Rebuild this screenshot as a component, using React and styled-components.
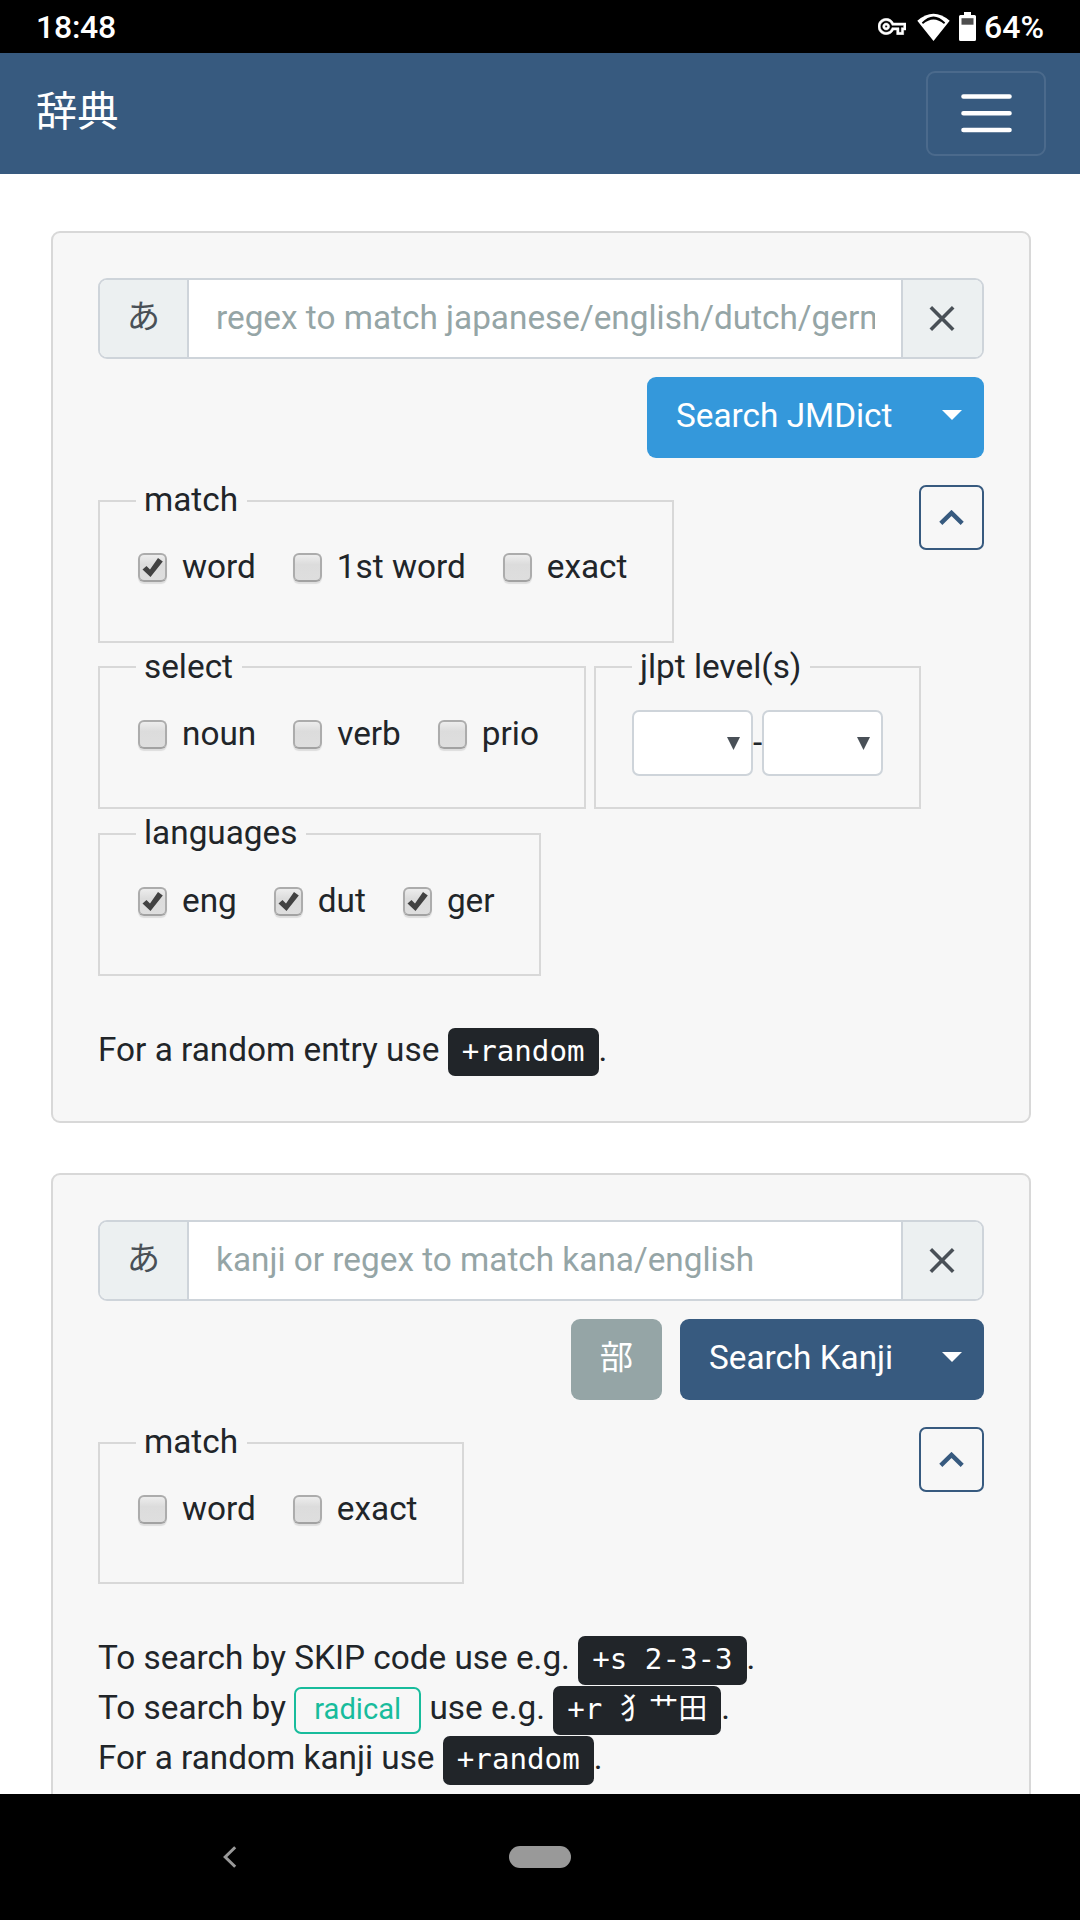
import React from "react";
import styled, { createGlobalStyle } from "styled-components";

const GlobalStyle = createGlobalStyle`
  * { box-sizing: border-box; }
  html, body { margin: 0; padding: 0; background: #fff; }
  body {
    font-family: Roboto, "Noto Sans CJK JP", sans-serif;
    font-size: 33.33px;
    line-height: 50px;
    color: #212529;
  }
  button, input { font: inherit; }
`;

const Screen = styled.div`
  width: 1080px;
  height: 1920px;
  display: flex;
  flex-direction: column;
  overflow: hidden;
`;

const StatusBar = styled.header`
  flex: none;
  height: 53px;
  padding: 0 36px;
  display: flex;
  align-items: center;
  justify-content: space-between;
  background: #000;
  color: #fff;
  font-size: 32px;
  font-weight: 500;
`;

const StatusText = styled.span`
  padding-top: 1px;
  letter-spacing: -0.25px;
`;

const StatusIcons = styled.div`
  display: flex;
  align-items: center;
  svg { display: block; }
`;

const WifiIcon = styled.svg`
  margin: 0 9px 0 11px;
`;

const BatteryLevel = styled(StatusText)`
  width: 60px;
  margin-left: 8px;
  letter-spacing: 0;
`;

const Navbar = styled.nav`
  flex: none;
  height: 121px;
  padding: 0 34px 0 36px;
  display: flex;
  align-items: center;
  justify-content: space-between;
  background: #375a7f;
`;

const Brand = styled.span`
  color: #fff;
  font-size: 41.3px;
  line-height: 62px;
  margin-top: -3px;
`;

const Toggler = styled.button`
  width: 120px;
  height: 85px;
  padding: 0;
  border: 2px solid rgba(255, 255, 255, 0.1);
  border-radius: 9px;
  background: transparent;
  display: flex;
  align-items: center;
  justify-content: center;
`;

const Content = styled.main`
  flex: 1;
  min-height: 0;
  overflow: hidden;
  padding: 57px 49px 0 51px;
  display: flex;
  flex-direction: column;
  gap: 50px;
  background: #fff;
`;

const Card = styled.section`
  flex: none;
  padding: 45px;
  background: #f7f7f7;
  border: 2px solid #d8d8d8;
  border-radius: 9px;
`;

const InputGroup = styled.div`
  display: flex;
  height: 81px;
  border: 2px solid #ced4da;
  border-radius: 9px;
  background: #fff;
  overflow: hidden;
`;

const Addon = styled.div`
  flex: none;
  width: ${(p) => p.$width}px;
  display: flex;
  align-items: center;
  justify-content: center;
  background: #ecf0f1;
  color: #495057;
  padding-bottom: ${(p) => p.$lift || 0}px;
  padding-right: ${(p) => p.$inset || 0}px;
  border: 0 solid #ced4da;
  border-${(p) => p.$divider}-width: 2px;
`;

const SearchInput = styled.input`
  flex: 1;
  min-width: 0;
  padding: 0 26px 2px 27px;
  border: 0;
  outline: 0;
  background: #fff;
  &::placeholder { color: #95a5a6; opacity: 1; }
`;

const Actions = styled.div`
  display: flex;
  justify-content: flex-end;
  gap: 18px;
  margin-top: 18px;
`;

const Button = styled.button`
  height: 81px;
  padding: 0 22px 4px 29px;
  border: 0;
  border-radius: 9px;
  background: ${(p) => p.$color};
  color: #fff;
  display: flex;
  align-items: center;
  justify-content: space-between;
  width: ${(p) => p.$width}px;
`;

const SquareButton = styled(Button)`
  padding: 0 0 3px;
  justify-content: center;
`;

const Caret = styled.i`
  width: 0;
  height: 0;
  margin-bottom: 2px;
  border: 10px solid transparent;
  border-top-color: #fff;
  border-bottom: 0;
`;

const Options = styled.div`
  margin-top: 18px;
`;

const OptionRow = styled.div`
  display: flex;
  align-items: flex-start;
  gap: 8px;
  height: ${(p) => p.$height || 167}px;
`;

const Collapse = styled.button`
  width: 65px;
  height: 65px;
  margin: 9px 0 0 auto;
  padding: 0;
  border: 2px solid #375a7f;
  border-radius: 7px;
  background: transparent;
  display: flex;
  align-items: center;
  justify-content: center;
`;

const Fieldset = styled.fieldset`
  height: ${(p) => p.$height || 167}px;
  width: ${(p) => p.$width}px;
  min-width: 0;
  margin: 0;
  padding: 0 36px;
  border: 2px solid #d8d8d8;
`;

const Legend = styled.legend`
  padding: 0 9px 0 8px;
  height: 50px;
  line-height: ${(p) => p.$line || 48}px;
`;

const Checks = styled.div`
  display: flex;
  height: ${(p) => p.$height || 84}px;
  align-items: center;
  gap: 37px;
  padding-left: 2px;
`;

const CheckLabel = styled.label`
  display: flex;
  align-items: center;
  white-space: pre;
`;

const CheckBox = styled.span`
  width: 29px;
  height: 29px;
  margin: 1px 15px 0 0;
  border: 2px solid #acacac;
  border-bottom-color: #a2a2a2;
  border-radius: 6px;
  background: linear-gradient(#ededed, #dcdcdc 38%, #dedede);
  box-shadow: 0 2px 1px rgba(0, 0, 0, 0.1);
  display: flex;
  align-items: center;
  justify-content: center;
  svg { flex: none; }
`;

const Levels = styled.div`
  display: flex;
  align-items: center;
  margin-top: 18px;
`;

const Select = styled.div`
  width: 121px;
  height: 66px;
  padding-right: 11px;
  border: 2px solid #ced4da;
  border-radius: 7px;
  background: #fff;
  display: flex;
  align-items: center;
  justify-content: flex-end;
`;

const Dash = styled.span`
  width: 9px;
  display: flex;
  justify-content: center;
`;

const Help = styled.div`
  margin-top: 50px;
`;

const HelpLine = styled.p`
  margin: 0;
  height: 50px;
  line-height: 48px;
  display: flex;
  white-space: pre;
`;

const Code = styled.code`
  height: ${(p) => p.$height || 49}px;
  margin-top: 2px;
  padding: 0 14px;
  line-height: 46px;
  border-radius: 7px;
  background: #212529;
  color: #fff;
  font-family: "DejaVu Sans Mono", "Noto Sans CJK JP", monospace;
  font-size: 29.17px;
`;

const Radical = styled.a`
  height: 47px;
  width: 127px;
  margin-top: 3px;
  line-height: 40px;
  border: 2px solid #18bc9c;
  border-radius: 7px;
  color: #18bc9c;
  font-size: 29.17px;
  text-align: center;
`;

const SystemNav = styled.footer`
  flex: none;
  height: 126px;
  padding-left: 223px;
  display: flex;
  align-items: center;
  background: #000;
`;

const HomePill = styled.span`
  width: 62px;
  height: 22px;
  margin-left: 272px;
  border-radius: 11px;
  background: #999;
`;

function Check({ label, checked }) {
  return (
    <CheckLabel>
      <CheckBox role="checkbox" aria-checked={!!checked}>
        {checked && (
          <svg width="25" height="25" viewBox="0 0 25 25">
            <path d="M2.5 14.5L6.5 11L10 14.5L18 3L22.8 6.5L10.5 22Z" fill="#424242" />
          </svg>
        )}
      </CheckBox>
      {label}
    </CheckLabel>
  );
}

function CheckGroup({ legend, width, items, height, checksHeight, legendLine }) {
  return (
    <Fieldset $width={width} $height={height}>
      <Legend $line={legendLine}>{legend}</Legend>
      <Checks $height={checksHeight}>
        {items.map(([label, checked]) => (
          <Check key={label} label={label} checked={checked} />
        ))}
      </Checks>
    </Fieldset>
  );
}

function SearchField({ placeholder }) {
  return (
    <InputGroup>
      <Addon $width={89} $divider="right" $lift={4}>あ</Addon>
      <SearchInput placeholder={placeholder} />
      <Addon $width={81} $divider="left" $inset={2}>
        <svg width="26" height="26" viewBox="0 0 26 26">
          <path d="M1.8 1.3L24.2 23.7M24.2 1.3L1.8 23.7" stroke="#495057" strokeWidth="3.6" />
        </svg>
      </Addon>
    </InputGroup>
  );
}

function CollapseButton() {
  return (
    <Collapse aria-label="Collapse options">
      <svg width="25" height="15" viewBox="0 0 25 15">
        <path d="M1.8 13.4L12.5 2.9L23.200 13.4" fill="none" stroke="#375a7f" strokeWidth="4.4" />
      </svg>
    </Collapse>
  );
}

function LevelSelect() {
  return (
    <Select>
      <svg width="13" height="13" viewBox="0 0 13 13">
        <path d="M0 0H13L6.5 13Z" fill="#495057" />
      </svg>
    </Select>
  );
}

export default function App() {
  return (
    <Screen>
      <GlobalStyle />
      <StatusBar>
        <StatusText>18:48</StatusText>
        <StatusIcons>
          <svg width="28" height="17" viewBox="0 4.8 24 14.4">
            <path
              fill="#fff"
              stroke="#fff"
              strokeWidth="0.4"
              d="M22 19h-6v-4h-2.68c-1.14 2.42-3.6 4-6.32 4-3.86 0-7-3.14-7-7s3.14-7 7-7c2.72 0 5.17 1.58 6.32 4H24v6h-2v4zm-4-2h2v-4h2v-2H11.94l-.23-.67C11.01 8.34 9.11 7 7 7c-2.76 0-5 2.24-5 5s2.24 5 5 5c2.11 0 4.01-1.34 4.71-3.33l.23-.67H18v4zM7 15c-1.65 0-3-1.35-3-3s1.35-3 3-3 3 1.35 3 3-1.35 3-3 3zm0-4c-.55 0-1 .45-1 1s.45 1 1 1 1-.45 1-1-.45-1-1-1z"
            />
          </svg>
          <WifiIcon width="33" height="28" viewBox="0 0 33 28">
            <path d="M0.3 7.8Q16.5 -6.2 32.7 7.8L16.5 28Z" fill="#fff" />
            <path d="M4.8 9.6Q16.5 -2.6 28.2 9.6L27 11Q16.5 2 6 11Z" fill="#000" />
          </WifiIcon>
          <svg width="17" height="29" viewBox="0 0 17 29">
            <path d="M5 0h7v3h3.5q1.5 0 1.5 1.5v23q0 1.5 -1.5 1.5h-14q-1.5 0 -1.5 -1.5v-23q0 -1.5 1.5 -1.5H5z" fill="#fff" />
            <path d="M2.5 6.2h12v6.5h-12z" fill="#4d4d4d" />
          </svg>
          <BatteryLevel>64%</BatteryLevel>
        </StatusIcons>
      </StatusBar>
      <Navbar>
        <Brand>辞典</Brand>
        <Toggler aria-label="Menu">
          <svg width="51" height="39" viewBox="0 0 51 39">
            <path d="M2.5 2.5H48.5M2.5 19.3H48.5M2.5 36H48.5" stroke="#fff" strokeWidth="4.6" strokeLinecap="round" />
          </svg>
        </Toggler>
      </Navbar>
      <Content>
        <Card>
          <SearchField placeholder="regex to match japanese/english/dutch/german" />
          <Actions>
            <Button $color="#3498db" $width={337}>
              Search JMDict
              <Caret />
            </Button>
          </Actions>
          <Options>
            <OptionRow $height={166}>
              <CheckGroup legend="match" width={576} checksHeight={82} items={[["word", true], ["1st word"], ["exact"]]} />
              <CollapseButton />
            </OptionRow>
            <OptionRow>
              <CheckGroup legend="select" width={488} legendLine={50} items={[["noun"], ["verb"], ["prio"]]} />
              <Fieldset $width={327}>
                <Legend $line={50}>jlpt level(s)</Legend>
                <Levels>
                  <LevelSelect />
                  <Dash>-</Dash>
                  <LevelSelect />
                </Levels>
              </Fieldset>
            </OptionRow>
            <OptionRow>
              <CheckGroup legend="languages" width={443} items={[["eng", true], ["dut", true], ["ger", true]]} />
            </OptionRow>
          </Options>
          <Help>
            <HelpLine>
              {"For a random entry use "}
              <Code $height={48}>+random</Code>.
            </HelpLine>
          </Help>
        </Card>
        <Card>
          <SearchField placeholder="kanji or regex to match kana/english" />
          <Actions>
            <SquareButton $color="#95a5a6" $width={91}>部</SquareButton>
            <Button $color="#375a7f" $width={304}>
              Search Kanji
              <Caret />
            </Button>
          </Actions>
          <Options>
            <OptionRow $height={166}>
              <CheckGroup legend="match" width={366} height={166} checksHeight={82} items={[["word"], ["exact"]]} />
              <CollapseButton />
            </OptionRow>
          </Options>
          <Help>
            <HelpLine>
              {"To search by SKIP code use e.g. "}
              <Code>+s 2-3-3</Code>.
            </HelpLine>
            <HelpLine>
              {"To search by "}
              <Radical>radical</Radical>
              {" use e.g. "}
              <Code>+r 犭艹田</Code>.
            </HelpLine>
            <HelpLine>
              {"For a random kanji use "}
              <Code>+random</Code>.
            </HelpLine>
          </Help>
        </Card>
      </Content>
      <SystemNav>
        <svg width="14" height="22" viewBox="0 0 14 22">
          <path d="M12.2 1.2L2.2 11L12.2 20.8" fill="none" stroke="#999" strokeWidth="3" />
        </svg>
        <HomePill />
      </SystemNav>
    </Screen>
  );
}
